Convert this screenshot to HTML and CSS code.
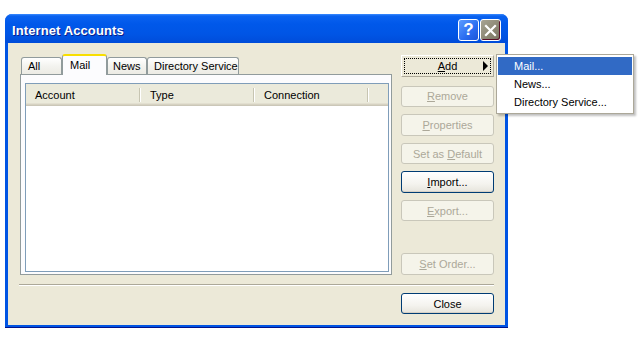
FILE: index.html
```html
<!DOCTYPE html>
<html lang="en">
<head>
<meta charset="UTF-8">
<meta name="viewport" content="width=device-width, initial-scale=1.0">
<link rel="stylesheet" href="styles.css">
<title>Internet Accounts</title>
</head>
<body>
  <div class="window">
    <div class="titlebar">
      <span class="title">Internet Accounts</span>
      <div class="caption-btns">
        <span class="cap help">?</span>
        <span class="cap close">
          <svg width="13" height="13" viewBox="0 0 13 13"><path d="M2 2 L11 11 M11 2 L2 11" stroke="#fff" stroke-width="2.2" stroke-linecap="square"/></svg>
        </span>
      </div>
    </div>
    <div class="client">
      <div class="main">
        <div class="tabs-area">
          <div class="tabs">
            <div class="tab w-all">All</div>
            <div class="tab w-mail active">Mail</div>
            <div class="tab w-news">News</div>
            <div class="tab w-dir">Directory Service</div>
          </div>
          <div class="panel">
            <div class="listview">
              <div class="lv-header">
                <div class="col c-account">Account</div>
                <div class="col c-type">Type</div>
                <div class="col c-conn">Connection</div>
              </div>
            </div>
          </div>
        </div>
        <div class="buttons">
          <div class="btn add"><span class="focus"><span><u>A</u>dd</span></span><span class="arrow"></span></div>
          <div class="btn disabled"><span><u>R</u>emove</span></div>
          <div class="btn disabled"><span><u>P</u>roperties</span></div>
          <div class="btn disabled"><span>Set as <u>D</u>efault</span></div>
          <div class="btn"><span><u>I</u>mport...</span></div>
          <div class="btn disabled"><span><u>E</u>xport...</span></div>
          <div class="btn disabled order"><span><u>S</u>et Order...</span></div>
        </div>
      </div>
      <div class="separator"></div>
      <div class="footer">
        <div class="btn"><span>Close</span></div>
      </div>
    </div>
  </div>

  <div class="menu">
    <div class="item selected">Mail...</div>
    <div class="item">News...</div>
    <div class="item">Directory Service...</div>
  </div>
</body>
</html>
```

FILE: styles.css
```css
body {
  margin: 0;
  background: #fff;
  font-family: "Liberation Sans", Arial, sans-serif;
  font-size: 11px;
  color: #000;
}
.window {
  margin: 14px 0 0 5px;
  width: 503px;
  height: 314px;
  background: #0054e3;
  border-radius: 7px 7px 0 0;
  display: flex;
  flex-direction: column;
  overflow: hidden;
  box-shadow: inset 0 -1px 0 #00138c;
}
.titlebar {
  height: 29px;
  background: linear-gradient(#3c8cff 0, #0a62ef 2px, #0058ea 10px, #0055e5 70%, #004cd9 100%);
  display: flex;
  align-items: flex-start;
  padding: 5px 7px 0 7px;
  box-sizing: border-box;
  flex-shrink: 0;
}
.title {
  color: #fff;
  font-weight: bold;
  font-size: 13px;
  line-height: 15px;
  margin-top: 4px;
  text-shadow: 1px 1px 0 #0a1e8c;
  letter-spacing: 0.1px;
  flex: 1;
}
.caption-btns {
  display: flex;
  gap: 1px;
}
.cap {
  width: 19px;
  height: 20px;
  border: 1px solid #fff;
  border-radius: 3px;
  display: flex;
  align-items: center;
  justify-content: center;
}
.help {
  background: linear-gradient(135deg, #5a9cff, #2a6cf0 60%, #1c56d8);
  color: #fff;
  font-weight: bold;
  font-size: 17px;
}
.close {
  background: linear-gradient(135deg, #a8a494, #8a8672 60%, #7a7462);
  box-shadow: inset -1px -1px 0 #5a0e28;
}
.client {
  flex: 1;
  background: #ece9d8;
  margin: 0 3px 3px 3px;
  padding: 11px 11px 11px 12px;
  display: flex;
  flex-direction: column;
}
.main {
  display: flex;
  height: 221px;
}
.tabs-area {
  width: 372px;
  display: flex;
  flex-direction: column;
}
.tabs {
  display: flex;
  align-items: flex-end;
  height: 20px;
  padding-left: 1px;
}
.tab {
  box-sizing: border-box;
  height: 17px;
  line-height: 17px;
  padding-left: 6px;
  border: 1px solid #919b9c;
  border-bottom: none;
  border-radius: 3px 3px 0 0;
  background: linear-gradient(#fff, #f3f3ef 50%, #ecebe4);
}
.tab.active {
  height: 21px;
  line-height: 19px;
  background: #fcfcfe;
  border-top: 2px solid #f8de00;
  position: relative;
  top: 1px;
  margin-top: -1px;
  padding-left: 7px;
}
.w-all { width: 41px; }
.w-mail { width: 45px; }
.w-news { width: 40px; padding-left: 5px; }
.w-dir { width: 92px; }
.panel {
  height: 193px;
  border: 1px solid #919b9c;
  background: #fcfcfe;
  padding: 8px 2px 2px 4px;
}
.listview {
  height: 187px;
  border: 1px solid #7f9db9;
  background: #fff;
}
.lv-header {
  display: flex;
  height: 19px;
  background: #ebeadb;
  box-shadow: 0 1px 0 #e2dfd0, 0 2px 0 #d6d2c2, 0 3px 0 #cbc7b8;
}
.col {
  line-height: 23px;
  height: 19px;
  padding-left: 9px;
  position: relative;
}
.col::after {
  content: "";
  position: absolute;
  right: 0;
  top: 4px;
  height: 14px;
  width: 1px;
  background: #c7c5b2;
  box-shadow: 1px 0 0 #fff;
}
.c-account { width: 105px; }
.c-type { width: 104px; padding-left: 10px; }
.c-conn { width: 104px; padding-left: 10px; }
.buttons {
  margin-left: 9px;
  width: 93px;
  display: flex;
  flex-direction: column;
  gap: 7px;
  padding-top: 1px;
}
.btn {
  height: 20px;
  border: 1px solid #003c74;
  border-radius: 3px;
  background: linear-gradient(#fff, #f4f3ee 60%, #e6e4dc);
  display: flex;
  align-items: center;
  justify-content: center;
  box-shadow: inset 0 -1px 0 #d6d0c5;
}
.btn.disabled {
  border-color: #c9c7ba;
  background: #f5f4ea;
  color: #aca899;
  box-shadow: none;
}
.btn.add {
  border: 1px solid #fff;
  border-right-color: #aca899;
  border-bottom-color: #aca899;
  border-radius: 0;
  background: #ece9d8;
  box-shadow: none;
  margin-bottom: 2px;
  position: relative;
}
.focus {
  position: absolute;
  left: 2px;
  right: 2px;
  top: 2px;
  bottom: 2px;
  border: 1px dotted #000;
  display: flex;
  align-items: center;
  justify-content: center;
}
.arrow {
  position: absolute;
  right: 5px;
  top: 5px;
  border-left: 5px solid #000;
  border-top: 5px solid transparent;
  border-bottom: 5px solid transparent;
}
.btn.order {
  margin-top: 25px;
}
.separator {
  margin-top: 9px;
  margin-left: -1px;
  width: 475px;
  height: 1px;
  background: #aca899;
  border-bottom: 1px solid #fff;
}
.footer {
  display: flex;
  justify-content: flex-end;
  margin-top: 7px;
}
.footer .btn {
  width: 91px;
  height: 19px;
}
.menu {
  position: absolute;
  left: 496px;
  top: 54px;
  width: 134px;
  padding: 2px 1px;
  background: #fff;
  border: 1px solid #aca899;
  box-shadow: 2px 2px 2px rgba(0, 0, 0, 0.25);
}
.item {
  height: 18px;
  line-height: 18px;
  padding-left: 16px;
}
.item.selected {
  background: #316ac5;
  color: #fff;
}
```
